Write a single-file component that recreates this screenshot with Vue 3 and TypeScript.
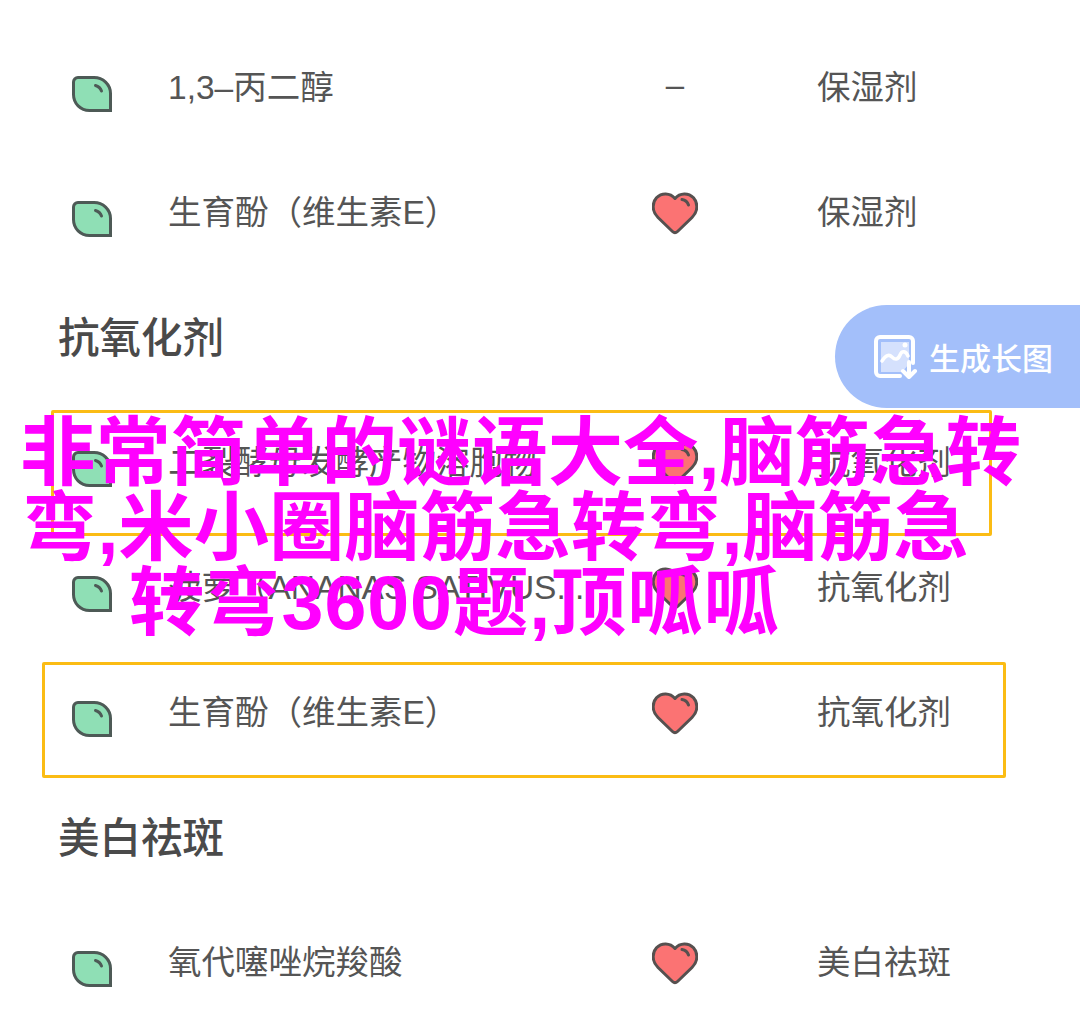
<template>
  <div class="page">
    <div class="list">
      <template v-for="(row, i) in rows" :key="i">
        <h2 v-if="row.heading" class="heading">{{ row.heading }}</h2>
        <div v-else class="row">
          <svg class="leaf" viewBox="0 0 40 36" width="40" height="36">
            <path d="M1.500 6a4.500 4.500 0 0 1 4.500-4.500h16c9 0 16.500 7 16.500 16v17h-21c-9 0-16-7-16-16z" fill="#8fdfb5" stroke="#4d5a56" stroke-width="3" stroke-linejoin="miter" />
            <path d="M23.500 9.500c3 .8 5 2.600 6 5.500" fill="none" stroke="#4d5a56" stroke-width="3" stroke-linecap="round" />
          </svg>
          <span class="name">{{ row.name }}</span>
          <span class="mid">
            <svg v-if="row.heart" class="heart" viewBox="0 0 46 44" width="46" height="44">
              <path d="M20.500 40.500 6 26.500C-.5 20 .2 11.500 4.500 6.800 9.500 1.500 18 1.500 23 7.500c5-6 13.500-6 18.500-.7 4.300 4.700 5 13.200-1.500 19.700L25.500 40.500c-1.500 1.400-3.500 1.400-5 0z" fill="#fb7373" stroke="#56504f" stroke-width="3" stroke-linejoin="round" />
              <path d="M30 8.500c3.200.500 5.500 2.500 6.500 5.500" fill="none" stroke="#56504f" stroke-width="3" stroke-linecap="round" />
            </svg>
            <span v-else class="dash">–</span>
          </span>
          <span class="use">{{ row.use }}</span>
        </div>
      </template>
    </div>

    <div class="pill">
      <svg viewBox="0 0 44 44" width="44" height="44">
        <path d="M7 7h28v22l-7 8H7z" fill="#d5e1fd" />
        <path d="M26 41H6a4 4 0 0 1-4-4V6a4 4 0 0 1 4-4h29a4 4 0 0 1 4 4v22" fill="none" stroke="#fff" stroke-width="4" stroke-linecap="round" />
        <path d="M8 26c4-6 7-7 10-4s6 3 8-2 6-4 8 1" fill="none" stroke="#fff" stroke-width="3.500" stroke-linecap="round" />
        <circle cx="31" cy="10" r="2.500" fill="#fff" />
        <path d="M35 27v14m-6-5 6 6 6-6" fill="none" stroke="#fff" stroke-width="4" stroke-linecap="round" stroke-linejoin="round" />
      </svg>
      <span>生成长图</span>
    </div>

    <div class="frame frame-a"></div>
    <div class="frame frame-b"></div>

    <div class="title">
      <div class="line line-1">非常简单的谜语大全,脑筋急转</div>
      <div class="line line-2">弯,米小圈脑筋急转弯,脑筋急</div>
      <div class="line line-3">转弯3600题,顶呱呱</div>
    </div>
  </div>
</template>

<script setup lang="ts">
interface Row {
  heading?: string
  name?: string
  heart?: boolean
  use?: string
}

const rows: Row[] = [
  { name: '1,3–丙二醇', use: '保湿剂' },
  { name: '生育酚（维生素E）', heart: true, use: '保湿剂' },
  { heading: '抗氧化剂' },
  { name: '二裂酵母发酵产物溶胞物', heart: true, use: '抗氧化剂' },
  { name: '菠萝（ANANAS SATIVUS...', heart: true, use: '抗氧化剂' },
  { name: '生育酚（维生素E）', heart: true, use: '抗氧化剂' },
  { heading: '美白祛斑' },
  { name: '氧代噻唑烷羧酸', heart: true, use: '美白祛斑' }
]
</script>

<style>
html,
body {
  background: #fff;
}
</style>

<style scoped>
.page {
  position: relative;
  width: 1080px;
  height: 1036px;
  overflow: hidden;
  background: #fff;
  font-family: "Liberation Sans", "Noto Sans CJK SC", sans-serif;
}

.list {
  padding-top: 22px;
}

.row {
  display: grid;
  grid-template-columns: 96px 452px 110px 1fr;
  align-items: center;
  height: 125px;
  padding-left: 72px;
  color: #555;
  font-size: 33.500px;
}

.heading {
  display: flex;
  align-items: center;
  height: 125px;
  margin: 0;
  padding-left: 58px;
  color: #4a4a4a;
  font-size: 41.500px;
  font-weight: 500;
}

.leaf {
  margin-top: 18px;
}

.heart {
  margin-top: 6px;
}

.name {
  white-space: nowrap;
}

.mid {
  display: flex;
  justify-content: center;
}

.dash {
  font-size: 33px;
}

.use {
  padding-left: 87px;
  white-space: nowrap;
}

.pill {
  position: absolute;
  top: 305px;
  left: 835px;
  display: flex;
  align-items: center;
  gap: 11px;
  width: 245px;
  height: 103px;
  padding-left: 39px;
  box-sizing: border-box;
  border-radius: 52px 0 0 52px;
  background: #a3bffa;
  color: #fff;
  font-size: 31px;
  font-weight: 500;
}

.frame {
  position: absolute;
  box-sizing: border-box;
  border: 3px solid #fbbc14;
  border-radius: 2px;
}

.frame-a {
  top: 410px;
  left: 51px;
  width: 941px;
  height: 126px;
}

.frame-b {
  top: 662px;
  left: 42px;
  width: 964px;
  height: 116px;
}

.title {
  position: absolute;
  top: 416px;
  left: 0;
  color: #ff00ff;
  font-size: 75.400px;
  font-weight: 700;
  line-height: 75px;
  white-space: nowrap;
}

.line-1 {
  margin-left: 20px;
}

.line-2 {
  margin-left: 22px;
}

.line-3 {
  margin-left: 129px;
  letter-spacing: .9px;
}
</style>
